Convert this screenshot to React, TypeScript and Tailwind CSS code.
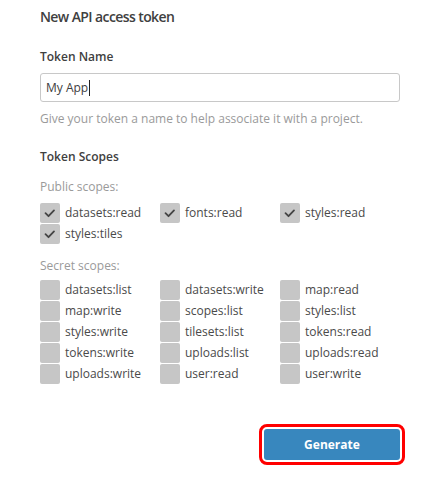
const publicScopes = [
  { name: "datasets:read", checked: true },
  { name: "fonts:read", checked: true },
  { name: "styles:read", checked: true },
  { name: "styles:tiles", checked: true },
];

const secretScopes = [
  "datasets:list",
  "datasets:write",
  "map:read",
  "map:write",
  "scopes:list",
  "styles:list",
  "styles:write",
  "tilesets:list",
  "tokens:read",
  "tokens:write",
  "uploads:list",
  "uploads:read",
  "uploads:write",
  "user:read",
  "user:write",
].map((name) => ({ name, checked: false }));

function Scope({ name, checked }: { name: string; checked: boolean }) {
  return (
    <label className="flex h-5 items-center gap-[5px]">
      <span className="flex h-5 w-5 shrink-0 items-center justify-center rounded-[2px] bg-[#c6c6c6]">
        {checked && (
          <svg width="20" height="20" viewBox="0 0 20 20" fill="none">
            <path d="M5.5 10.2l3 3 5.5-5.8" stroke="#444" strokeWidth="1.8" strokeLinecap="round" strokeLinejoin="round" />
          </svg>
        )}
      </span>
      <span className="text-[12px] leading-5 text-[#4a4a4a]">{name}</span>
    </label>
  );
}

export default function App() {
  return (
    <div className="h-[500px] w-[440px] bg-white px-10 pt-[5px] font-['Open_Sans',sans-serif]">
      <h1 className="text-[14px] font-semibold leading-6 tracking-[-0.6px] text-[#404040]">New API access token</h1>

      <div className="mt-[18px] text-[12px] font-semibold leading-5 text-[#404040]">Token Name</div>
      <div className="mt-[6px] flex h-[29px] items-center rounded-[3px] border border-[#c8c8c8] px-[5px] text-[12px] text-[#404040]">
        My App<span className="ml-px h-[16px] w-px bg-[#222]" />
      </div>
      <p className="mt-[7px] text-[12px] leading-5 text-[#9a9a9a]">Give your token a name to help associate it with a project.</p>

      <div className="mt-[18px] text-[12px] font-semibold leading-5 text-[#404040]">Token Scopes</div>

      <div className="mt-[10px] text-[12px] leading-5 text-[#9a9a9a]">Public scopes:</div>
      <div className="mt-[6px] grid grid-cols-3 gap-y-px">
        {publicScopes.map((s) => (
          <Scope key={s.name} {...s} />
        ))}
      </div>

      <div className="mt-[12px] text-[12px] leading-5 text-[#9a9a9a]">Secret scopes:</div>
      <div className="mt-[4px] grid grid-cols-3 gap-y-px">
        {secretScopes.map((s) => (
          <Scope key={s.name} {...s} />
        ))}
      </div>

      <div className="mt-[45px] flex justify-end">
        <button className="h-[31px] w-[136px] rounded-[3px] bg-[#3887be] text-[12px] font-bold text-white outline-3 outline-offset-2 outline-[#ff0000]">
          Generate
        </button>
      </div>
    </div>
  );
}
